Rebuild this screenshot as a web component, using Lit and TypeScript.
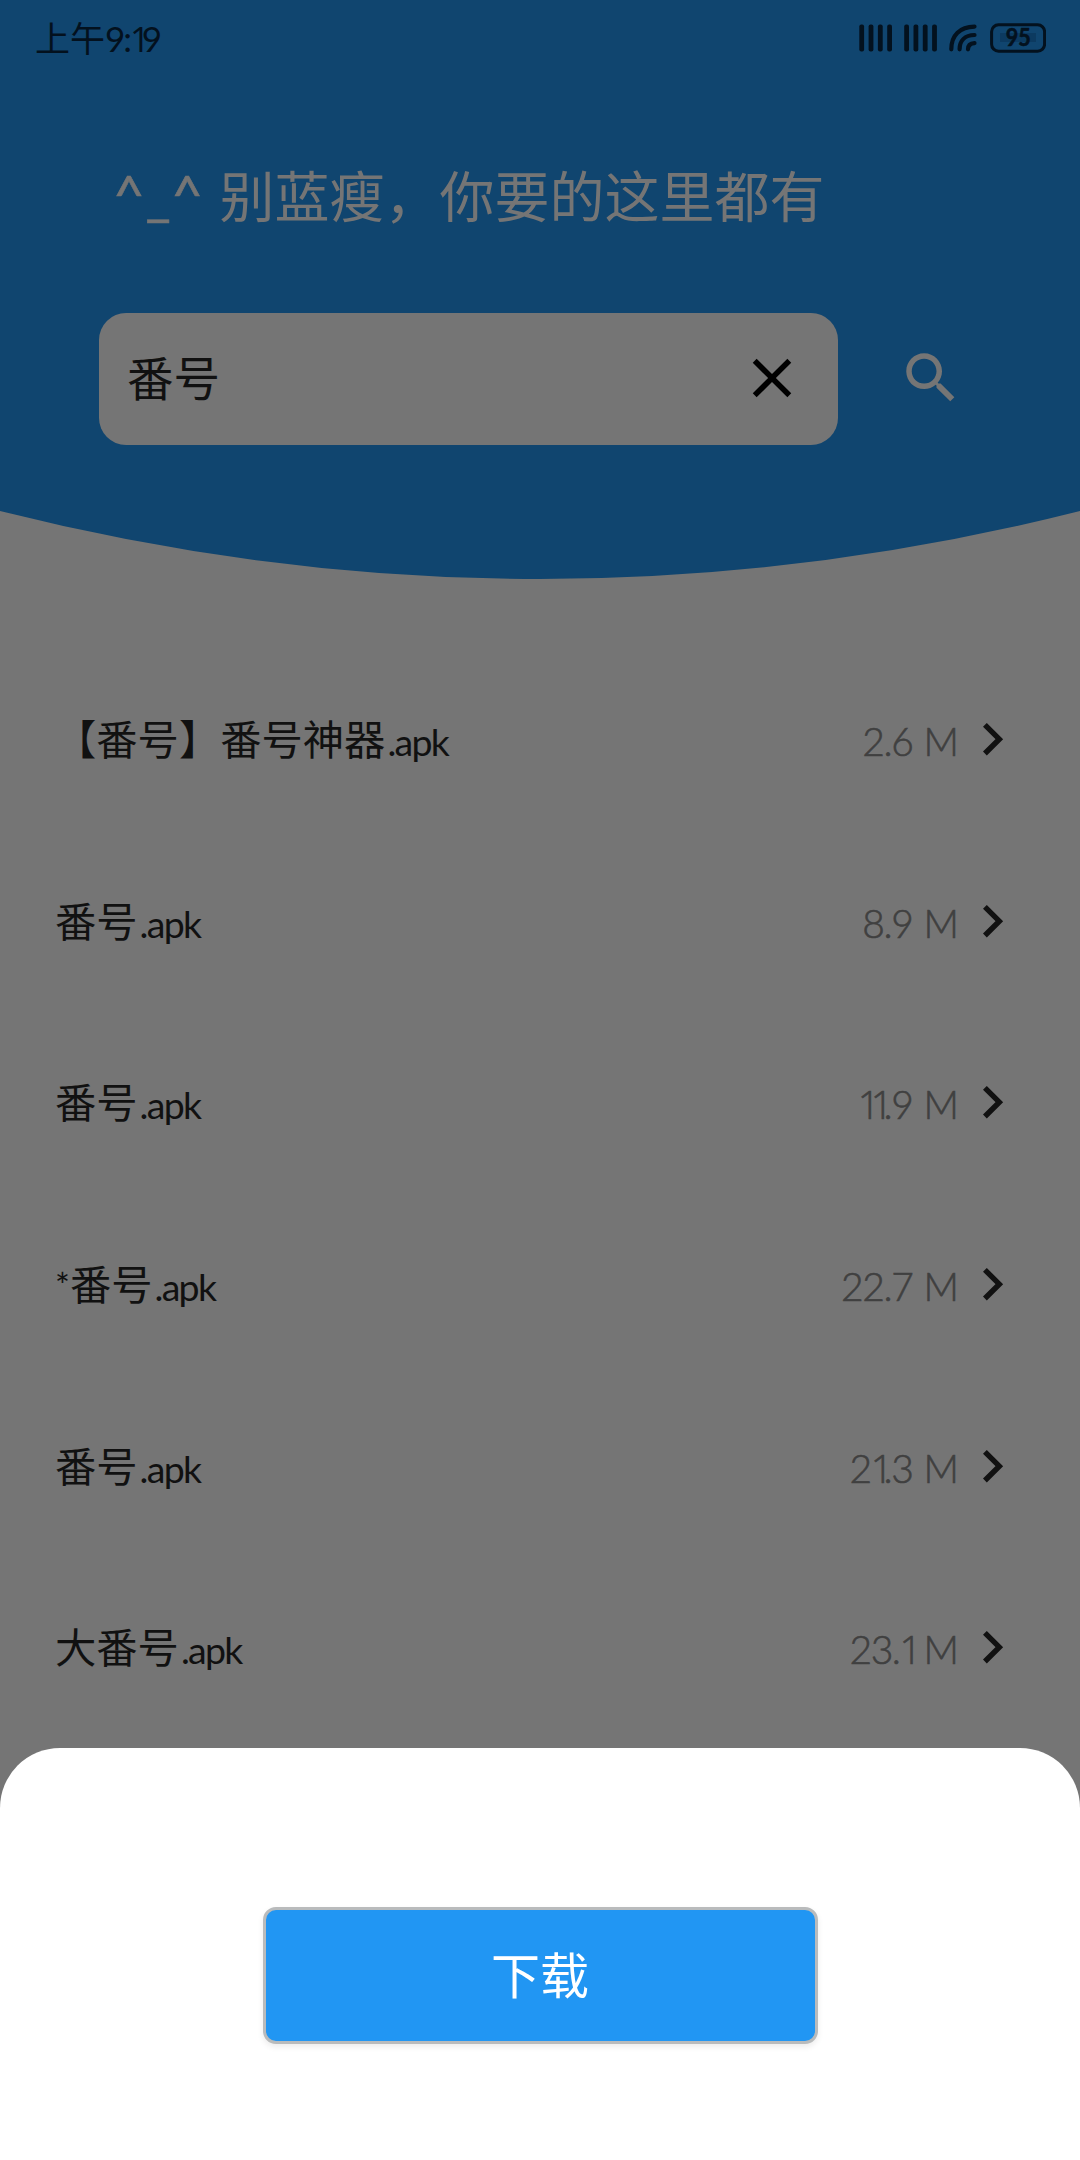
import { LitElement, html, css, svg } from "lit";
import { customElement, property } from "lit/decorators.js";

interface Entry {
  mark?: string;
  name: string;
  size: string;
}

const ENTRIES: Entry[] = [
  { name: "【番号】番号神器", size: "2.6" },
  { name: "番号", size: "8.9" },
  { name: "番号", size: "11.9" },
  { mark: "*", name: "番号", size: "22.7" },
  { name: "番号", size: "21.3" },
  { name: "大番号", size: "23.1" },
];

// Runs of the digit one are set narrow and without a foot.
const digits = (text: string) =>
  text.split(/(1+)/).map((run) => (run.startsWith("1") ? html`<span class="one">${run}</span>` : run));

const oneStyle = css`
  .one {
    font-family: "Open Sans", sans-serif;
    letter-spacing: -0.24em;
  }
`;

@customElement("status-bar")
class StatusBar extends LitElement {
  static styles = [
    oneStyle,
    css`
      :host {
        display: flex;
        align-items: center;
        justify-content: space-between;
        height: 76px;
        padding: 0 34px 0 35px;
        box-sizing: border-box;
        color: #03111e;
      }
      .clock {
        font-size: 35px;
        line-height: 76px;
      }
      .digits {
        letter-spacing: -2px;
      }
      .icons {
        display: block;
      }
      .level {
        font: 700 24px "Lato", sans-serif;
      }
    `,
  ];
  render() {
    const bars = [0, 9.3, 18.6, 27.9, 44.9, 54.2, 63.5, 72.8];
    return html`
      <span class="clock">上午<span class="digits">${digits("9:19")}</span></span>
      <svg class="icons" width="188" height="36" viewBox="0 -3 188 36" fill="none" stroke="#03111e">
        ${bars.map((x) => svg`<rect x=${1.3 + x} y="1.5" width="4.8" height="27" rx="2" fill="#03111e" stroke="none" />`)}
        <g stroke-width="4.2" stroke-linecap="round">
          <path d="M93.3 26.3C93.3 12 102 3.8 116.5 3.6" />
          <path d="M101.6 26.3C101.6 17.5 107 12.2 116.5 12" />
          <path d="M110 26.3C110 22.5 112.5 20.3 116.5 20.1" />
        </g>
        <rect x="142" y="10" width="36" height="9" fill="#0c3a60" stroke="none" />
        <rect x="133.6" y="1.8" width="53" height="26.4" rx="7" stroke-width="3" />
        <text class="level" x="160.2" y="23" text-anchor="middle" textLength="25" lengthAdjust="spacingAndGlyphs" fill="#03111e" stroke-width="0.6">95</text>
      </svg>
    `;
  }
}

@customElement("search-header")
class SearchHeader extends LitElement {
  static styles = css`
    :host {
      display: block;
      height: 580px;
      background: #10456f;
      clip-path: path("M0 0H1080V511Q540 647 0 511Z");
    }
    .title {
      height: 80px;
      margin: 80px 0 76px 113px;
      line-height: 80px;
      font-size: 55px;
      color: #757575;
      white-space: nowrap;
      display: flex;
    }
    .face {
      width: 106.5px;
      line-height: 76px;
      font-family: "Lato", sans-serif;
      letter-spacing: 0.5px;
      -webkit-text-stroke: 0.6px #757575;
    }
    .row {
      display: flex;
      align-items: center;
      padding-left: 99px;
      gap: 60px;
    }
    .field {
      display: flex;
      align-items: center;
      justify-content: space-between;
      width: 739px;
      height: 132px;
      padding: 0 33px 0 28px;
      margin-top: 0.5px;
      box-sizing: border-box;
      border-radius: 27px;
      background: #757575;
      font-size: 46.5px;
      color: #111;
    }
    .query {
      padding-bottom: 6px;
    }
    svg {
      display: block;
    }
    .field svg {
      padding-bottom: 2px;
    }
  `;
  render() {
    return html`
      <status-bar></status-bar>
      <div class="title"><span class="face">^_^</span><span>别蓝瘦，你要的这里都有</span></div>
      <div class="row">
        <div class="field">
          <span class="query">番号</span>
          <svg width="66" height="66" viewBox="0 0 24 24" fill="#000">
            <path d="M19 6.41L17.59 5 12 10.59 6.41 5 5 6.41 10.59 12 5 17.59 6.41 19 12 13.41 17.59 19 19 17.59 13.41 12z" />
          </svg>
        </div>
        <svg width="66" height="66" viewBox="0 0 24 24" fill="#757575">
          <path d="M15.5 14h-.79l-.28-.27C15.41 12.59 16 11.11 16 9.5 16 5.91 13.09 3 9.5 3S3 5.91 3 9.5 5.91 16 9.5 16c1.61 0 3.09-.59 4.23-1.57l.27.28v.79l5 4.99L20.49 19l-4.99-5zm-6 0C7.01 14 5 11.99 5 9.5S7.01 5 9.5 5 14 7.01 14 9.5 11.99 14 9.5 14z" />
        </svg>
      </div>
    `;
  }
}

@customElement("file-row")
class FileRow extends LitElement {
  @property({ attribute: false }) entry!: Entry;
  static styles = [
    oneStyle,
    css`
      :host {
        display: flex;
        align-items: center;
        height: 181.7px;
        padding: 0 55px;
        color: #111;
      }
      .name {
        display: flex;
        flex: 1;
        font-size: 41.3px;
        line-height: 60px;
        padding-bottom: 1px;
        white-space: nowrap;
      }
      .ext {
        font-size: 37.5px;
        letter-spacing: -1.7px;
        margin-left: 2px;
        padding-top: 3px;
      }
      .mark {
        font-size: 35px;
      }
      .size {
        font: 300 39px/60px "Lato", sans-serif;
        color: #404040;
        white-space: nowrap;
        letter-spacing: -1.4px;
        -webkit-text-stroke: 0.6px #404040;
      }
      .unit {
        margin-left: 11px;
      }
      svg {
        display: block;
        margin-left: 25.5px;
      }
    `,
  ];
  render() {
    const e = this.entry;
    return html`
      <span class="name">${e.mark ? html`<span class="mark">${e.mark}</span>` : ""}<span>${e.name}</span><span class="ext">.apk</span></span>
      <span class="size"><span>${digits(e.size)}</span><span class="unit">M</span></span>
      <svg width="42" height="36" viewBox="0 0 42 36" fill="none" stroke="#111" stroke-width="5.4">
        <path d="M1.9 1.9L16.3 16.2L1.9 30.5" />
      </svg>
    `;
  }
}

@customElement("download-sheet")
class DownloadSheet extends LitElement {
  static styles = css`
    :host {
      display: flex;
      justify-content: center;
      align-items: flex-start;
      height: 412.5px;
      padding-top: 159.5px;
      box-sizing: border-box;
      background: #fff;
      border-radius: 60px 60px 0 0;
    }
    .button {
      width: 555px;
      height: 137px;
      box-sizing: border-box;
      border: 3px solid #b9bbbc;
      border-radius: 13px;
      background: #2196f3;
      box-shadow: 0 3px 6px rgba(0, 0, 0, 0.08);
      color: #fff;
      font: inherit;
      font-size: 49px;
      line-height: 131px;
      padding: 0;
      text-align: center;
    }
  `;
  render() {
    return html`<button class="button">下载</button>`;
  }
}

@customElement("app-root")
class AppRoot extends LitElement {
  static styles = css`
    :host {
      display: flex;
      flex-direction: column;
      width: 1080px;
      height: 2160px;
      overflow: hidden;
      background: #757575;
      font-family: "Lato", "Noto Sans CJK SC", sans-serif;
    }
    .list {
      display: flex;
      flex-direction: column;
      flex: 1;
      min-height: 0;
      padding-top: 70px;
    }
  `;
  render() {
    return html`
      <search-header></search-header>
      <div class="list">${ENTRIES.map((e) => html`<file-row .entry=${e}></file-row>`)}</div>
      <download-sheet></download-sheet>
    `;
  }
}
